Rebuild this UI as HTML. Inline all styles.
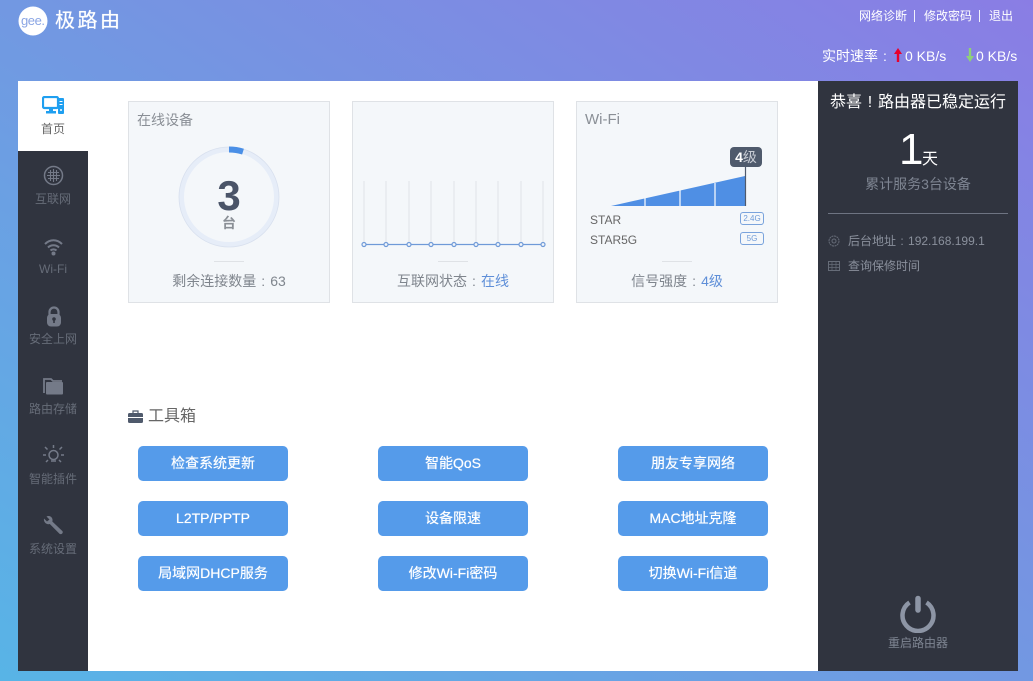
<!DOCTYPE html>
<html lang="zh"><head><meta charset="utf-8"><title>极路由</title>
<style>
*{box-sizing:border-box;margin:0;padding:0}
html,body{width:1033px;height:681px;overflow:hidden}
body{position:relative;background:linear-gradient(to top right,#58b4e6,#7298e2 50%,#8a7de4);font-family:"Liberation Sans","Noto Sans CJK SC",sans-serif;color:#666}
.a{position:absolute;white-space:nowrap}
.c{text-align:center}
.k{display:inline-block;width:14px;text-align:center}
.card{position:absolute;top:101px;width:202px;height:202px;background:#f4f7fa;border:1px solid #dfe2e6}
.btn{position:absolute;width:150px;height:35px;line-height:35px;border-radius:5px;background:#559bea;color:#fff;text-align:center;font-size:14px;text-shadow:0 0 .6px #fff}
.nav{position:absolute;left:18px;width:70px;text-align:center;font-size:12px;color:#666c78}
</style></head><body>
<svg class="a" style="left:18px;top:6px" width="30" height="30"><circle cx="15" cy="15" r="14.500" fill="#fff"/><text x="15" y="19" text-anchor="middle" font-family="Liberation Sans" font-size="13" fill="#8aa5e4" textLength="24">gee.</text></svg>
<div class="a" style="left:55px;top:6px;font-size:20px;line-height:30px;color:#fff;letter-spacing:2.500px;text-shadow:0 0 .6px #fff">极路由</div>
<div class="a" style="left:859px;top:8px;font-size:12px;line-height:17px;color:#fff">网络诊断</div>
<div class="a" style="left:914px;top:10px;width:1px;height:12px;background:#f0f1fc"></div>
<div class="a" style="left:924px;top:8px;font-size:12px;line-height:17px;color:#fff">修改密码</div>
<div class="a" style="left:979px;top:10px;width:1px;height:12px;background:#f0f1fc"></div>
<div class="a" style="left:989px;top:8px;font-size:12px;line-height:17px;color:#fff">退出</div>
<div class="a" style="left:822px;top:47px;font-size:14px;line-height:18px;color:#fff">实时速率<span class="k">:</span></div>
<svg class="a" style="left:894px;top:48px" width="10" height="15"><path d="M4 14V5" stroke="#e8002c" stroke-width="2.400"/><path d="M4 0L8 6H0Z" fill="#e8002c"/></svg>
<div class="a" style="left:905px;top:47px;font-size:14px;line-height:18px;color:#fff">0 KB/s</div>
<svg class="a" style="left:965px;top:48px" width="10" height="15"><path d="M5 0V9" stroke="#8fd07a" stroke-width="2.400"/><path d="M5 14L9 8H1Z" fill="#8fd07a"/></svg>
<div class="a" style="left:976px;top:47px;font-size:14px;line-height:18px;color:#fff">0 KB/s</div>

<div class="a" style="left:18px;top:81px;width:800px;height:590px;background:#fff"></div>
<div class="a" style="left:18px;top:151px;width:70px;height:520px;background:#30343f"></div>
<div class="a" style="left:818px;top:81px;width:200px;height:590px;background:#30343f"></div>

<svg class="a" style="left:42px;top:96px" width="23" height="19"><rect x="1" y="1" width="15" height="11" rx="1.500" fill="none" stroke="#1f9ff0" stroke-width="2.200"/><rect x="4" y="15" width="10" height="2.500" fill="#1f9ff0"/><rect x="7" y="12" width="4" height="4" fill="#1f9ff0"/><rect x="16" y="2" width="6" height="16" rx="1" fill="#1f9ff0"/><rect x="17.500" y="5" width="3" height="1" fill="#fff"/><rect x="17.500" y="8" width="3" height="1" fill="#fff"/><circle cx="19" cy="14" r="1" fill="#fff"/></svg>
<div class="nav" style="top:121px;line-height:17px;color:#666">首页</div>

<svg class="a" style="left:43px;top:165px" width="21" height="21" fill="none" stroke="#747a88"><circle cx="10.500" cy="10.500" r="9" stroke-width="1.500"/><path d="M5 7.500h11M4 10.500h13M5 13.500h11M7.500 5v11M10.500 4v13M13.500 5v11" stroke-width="1.100"/></svg>
<div class="nav" style="top:191px;line-height:17px">互联网</div>
<svg class="a" style="left:44px;top:238px" width="19" height="18" fill="none" stroke="#747a88" stroke-width="2"><path d="M1 6C6 1 13 1 18 6M4 9.500C7 6.500 12 6.500 15 9.500M6.500 12.500C8 11 11 11 12.500 12.500"/><circle cx="9.500" cy="15.500" r="2" fill="#747a88" stroke="none"/></svg>
<div class="nav" style="top:261px;line-height:17px">Wi-Fi</div>
<svg class="a" style="left:46px;top:306px" width="16" height="21"><path d="M3.500 9V6a4.500 4.500 0 0 1 9 0v3" fill="none" stroke="#747a88" stroke-width="2.200"/><rect x="1" y="8" width="14" height="12.500" rx="4" fill="#747a88"/><circle cx="8" cy="13" r="1.800" fill="#30343f"/><rect x="7.200" y="13" width="1.600" height="4" fill="#30343f"/></svg>
<div class="nav" style="top:331px;line-height:17px">安全上网</div>
<svg class="a" style="left:43px;top:377px" width="21" height="18"><path d="M1 16V2h7l2 2h9" fill="none" stroke="#747a88" stroke-width="1.800"/><rect x="3" y="5" width="17" height="12.500" rx="1" fill="#747a88"/></svg>
<div class="nav" style="top:401px;line-height:17px">路由存储</div>
<svg class="a" style="left:43px;top:445px" width="21" height="21" fill="none" stroke="#747a88" stroke-width="1.500"><circle cx="10.500" cy="10" r="4.500"/><path d="M8 16h5M10.500 0v3M2 2l2.500 2.500M19 2l-2.500 2.500M0 10h3M18 10h3M3 17l2-2M18 17l-2-2"/></svg>
<div class="nav" style="top:471px;line-height:17px">智能插件</div>
<svg class="a" style="left:43px;top:515px" width="21" height="21" fill="#747a88"><path d="M1 3.500L4 6.500 6.500 4.500 3.500 1.500C6 .3 9 1.500 9.500 4.500c.1.800 0 1.500-.2 2l10 9.500c1.500 1.700-1 4.200-2.800 2.700L6.800 9C3.500 10 .3 7 1 3.500Z"/></svg>
<div class="nav" style="top:541px;line-height:17px">系统设置</div>

<div class="card" style="left:128px">
<div class="a" style="left:8px;top:9px;font-size:14px;line-height:18px;color:#8a8f96">在线设备</div>
<svg class="a" style="left:49px;top:44px" width="102" height="102" fill="none"><circle cx="51" cy="51" r="47.500" stroke="#e6edf8" stroke-width="5"/><circle cx="51" cy="51" r="50" stroke="#d8e0ee" stroke-width=".8"/><path d="M51 3.500A47.500 47.500 0 0 1 65 5.600" stroke="#4a8fe6" stroke-width="6"/></svg>
<div class="a c" style="left:0;width:200px;top:67px;font-size:42px;line-height:54px;font-weight:bold;color:#4a5468">3</div>
<div class="a c" style="left:0;width:200px;top:112px;font-size:14px;font-weight:bold;line-height:18px;color:#8a8f96">台</div>
<div class="a" style="left:85px;top:159px;width:30px;height:1px;background:#dfe2e6"></div>
<div class="a c" style="left:0;width:200px;top:170px;font-size:14px;line-height:18px;color:#7f858d">剩余连接数量<span class="k">:</span>63</div>
</div>

<div class="card" style="left:352px">
<svg class="a" style="left:0;top:70px" width="200" height="90" fill="#f4f7fa">
<g stroke="#e0e3e8"><path d="M11 9V72M33 9V72M56 9V72M78 9V72M101 9V72M123 9V72M145 9V72M168 9V72M190 9V72"/></g>
<path d="M11 72.500H190" stroke="#6f9ad8" stroke-width="1.200"/>
<g stroke="#6f9ad8" stroke-width="1.200"><circle cx="11" cy="72.500" r="2"/><circle cx="33" cy="72.500" r="2"/><circle cx="56" cy="72.500" r="2"/><circle cx="78" cy="72.500" r="2"/><circle cx="101" cy="72.500" r="2"/><circle cx="123" cy="72.500" r="2"/><circle cx="145" cy="72.500" r="2"/><circle cx="168" cy="72.500" r="2"/><circle cx="190" cy="72.500" r="2"/></g></svg>
<div class="a" style="left:85px;top:159px;width:30px;height:1px;background:#dfe2e6"></div>
<div class="a c" style="left:0;width:200px;top:170px;font-size:14px;line-height:18px;color:#7f858d">互联网状态<span class="k">:</span><span style="color:#5f8fd8">在线</span></div>
</div>

<div class="card" style="left:576px">
<div class="a" style="left:8px;top:8px;font-size:15px;line-height:19px;color:#8a8f96">Wi-Fi</div>
<div class="a c" style="left:153px;top:45px;width:32px;height:20px;line-height:20px;border-radius:4px;background:#4f5a6c;color:#fff;font-size:14px"><b>4</b><span style="color:#c8ccd4">级</span></div>
<svg class="a" style="left:30px;top:65px" width="145" height="40"><path d="M4 39L138 9V39Z" fill="#4f8fe4"/><path d="M38 31V39M73 23V39M108 16V39" stroke="#fff" stroke-width="1.200"/><path d="M138.500 0V39" stroke="#4f5a6c" stroke-width="1.200"/></svg>
<div class="a" style="left:13px;top:110px;font-size:12px;line-height:16px;color:#666">STAR</div>
<div class="a" style="left:13px;top:130px;font-size:12px;line-height:16px;color:#666">STAR5G</div>
<div class="a c" style="left:163px;top:110px;width:24px;height:13px;line-height:11px;border:1px solid #7aa3dc;border-radius:3px;font-size:8px;color:#6f9bd8">2.4G</div>
<div class="a c" style="left:163px;top:130px;width:24px;height:13px;line-height:11px;border:1px solid #7aa3dc;border-radius:3px;font-size:8px;color:#6f9bd8">5G</div>
<div class="a" style="left:85px;top:159px;width:30px;height:1px;background:#dfe2e6"></div>
<div class="a c" style="left:0;width:200px;top:170px;font-size:14px;line-height:18px;color:#7f858d">信号强度<span class="k">:</span><span style="color:#5f8fd8">4级</span></div>
</div>

<svg class="a" style="left:128px;top:410px" width="15" height="13"><path d="M5 3V1h5v2" fill="none" stroke="#4f5a6c" stroke-width="1.200"/><rect x="0" y="3" width="15" height="10" rx="1.500" fill="#4f5a6c"/><rect x="0" y="7" width="15" height="1" fill="#fff"/></svg>
<div class="a" style="left:148px;top:406px;font-size:16px;line-height:22px;color:#666">工具箱</div>
<div class="btn" style="left:138px;top:446px">检查系统更新</div>
<div class="btn" style="left:378px;top:446px">智能QoS</div>
<div class="btn" style="left:618px;top:446px">朋友专享网络</div>
<div class="btn" style="left:138px;top:501px">L2TP/PPTP</div>
<div class="btn" style="left:378px;top:501px">设备限速</div>
<div class="btn" style="left:618px;top:501px">MAC地址克隆</div>
<div class="btn" style="left:138px;top:556px">局域网DHCP服务</div>
<div class="btn" style="left:378px;top:556px">修改Wi-Fi密码</div>
<div class="btn" style="left:618px;top:556px">切换Wi-Fi信道</div>

<div class="a c" style="left:818px;width:200px;top:92px;font-size:16px;line-height:22px;color:#fff">恭喜<span style="display:inline-block;width:16px;text-align:center">!</span>路由器已稳定运行</div>
<div class="a" style="left:899px;top:125px;font-size:44px;line-height:50px;color:#fff">1</div>
<div class="a" style="left:922px;top:150px;font-size:16px;line-height:20px;color:#fff">天</div>
<div class="a c" style="left:818px;width:200px;top:175px;font-size:14px;line-height:18px;color:#7e8592">累计服务3台设备</div>
<div class="a" style="left:828px;top:213px;width:180px;height:1px;background:#6e7482"></div>
<svg class="a" style="left:828px;top:235px" width="12" height="12" fill="none" stroke="#666c78"><circle cx="6" cy="6" r="5" stroke-dasharray="2 .6"/><circle cx="6" cy="6" r="2"/></svg>
<div class="a" style="left:848px;top:233px;font-size:12px;line-height:17px;color:#8a909c">后台地址<span style="display:inline-block;width:12px;text-align:center">:</span>192.168.199.1</div>
<svg class="a" style="left:828px;top:261px" width="12" height="10" fill="none" stroke="#666c78"><rect x=".5" y=".5" width="11" height="9"/><path d="M0 3.500h12M0 6.500h12M4 0v10M8 0v10" stroke-width=".7"/></svg>
<div class="a" style="left:848px;top:258px;font-size:12px;line-height:17px;color:#8a909c">查询保修时间</div>
<svg class="a" style="left:899px;top:595px" width="38" height="38" fill="none" stroke="#8d95a5" stroke-width="4.500"><path d="M10.500 7.500A15.500 15.500 0 1 0 27.500 7.500"/><path d="M19 3.500V15" stroke-width="5.500" stroke-linecap="round"/></svg>
<div class="a c" style="left:818px;width:200px;top:635px;font-size:12px;line-height:17px;color:#7e8592">重启路由器</div>
</body></html>
